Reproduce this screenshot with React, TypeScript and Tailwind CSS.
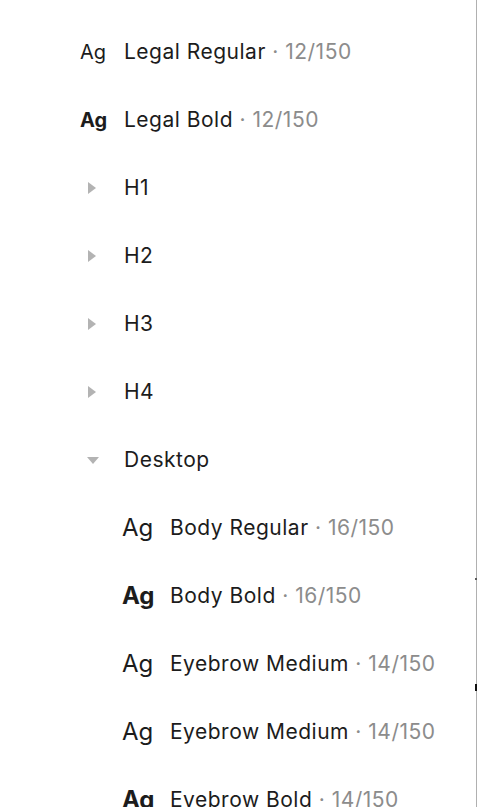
import { ReactNode } from "react"

type Style = { kind: "style"; name: string; meta: string; bold?: boolean; nested?: boolean }
type Group = { kind: "group"; name: string; open?: boolean }
type Row = Style | Group

const rows: Row[] = [
  { kind: "style", name: "Legal Regular", meta: "12/150" },
  { kind: "style", name: "Legal Bold", meta: "12/150", bold: true },
  { kind: "group", name: "H1" },
  { kind: "group", name: "H2" },
  { kind: "group", name: "H3" },
  { kind: "group", name: "H4" },
  { kind: "group", name: "Desktop", open: true },
  { kind: "style", name: "Body Regular", meta: "16/150", nested: true },
  { kind: "style", name: "Body Bold", meta: "16/150", bold: true, nested: true },
  { kind: "style", name: "Eyebrow Medium", meta: "14/150", nested: true },
  { kind: "style", name: "Eyebrow Medium", meta: "14/150", nested: true },
  { kind: "style", name: "Eyebrow Bold", meta: "14/150", bold: true, nested: true },
]

const Caret = ({ open }: { open?: boolean }) =>
  open ? (
    <svg width="12" height="7" viewBox="0 0 12 7" className="ml-[7px]">
      <path d="M0 0 H12 L6 7 Z" fill="#b3b3b3" />
    </svg>
  ) : (
    <svg width="8" height="12" viewBox="0 0 8 12" className="ml-[8px]">
      <path d="M0 0 L8 6 L0 12 Z" fill="#b3b3b3" />
    </svg>
  )

const Line = ({ children, nested }: { children: ReactNode; nested?: boolean }) => (
  <div className={`flex h-[68px] items-center ${nested ? "pl-[122px]" : "pl-[80px]"}`}>{children}</div>
)

export default function App() {
  return (
    <div className="relative h-[807px] w-[478px] overflow-hidden bg-white font-['Inter',sans-serif] text-[21px] tracking-[0.5px] text-[#1c1c1c]">
      <div className="absolute right-[1px] top-0 h-full w-[1px] bg-[#b0b0b0]" />
      <div className="absolute right-[1px] top-[578px] h-[2px] w-[2px] bg-[#5a5a5a]" />
      <div className="absolute right-[1px] top-[684px] h-[7px] w-[2px] bg-[#111]" />

      <div className="pt-[18px]">
        {rows.map((r, i) =>
          r.kind === "group" ? (
            <Line key={i}>
              <div className="flex w-[44px] items-center">
                <Caret open={r.open} />
              </div>
              <span>{r.name}</span>
            </Line>
          ) : (
            <Line key={i} nested={r.nested}>
              <span
                className={`${r.nested ? "w-[48px] text-[24px]" : "w-[44px] text-[20px]"} ${
                  r.bold ? "font-bold" : "font-normal"
                } leading-none tracking-normal`}
              >
                Ag
              </span>
              <span>
                {r.name}
                <span className="text-[#8c8c8c]"> · {r.meta}</span>
              </span>
            </Line>
          )
        )}
      </div>
    </div>
  )
}
